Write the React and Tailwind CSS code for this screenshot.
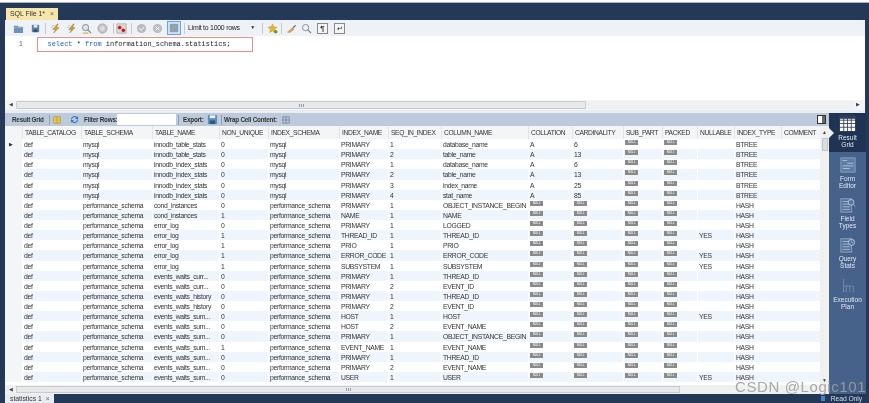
const cols = "grid-cols-[17px_59px_71px_67px_49px_71px_49px_53px_87px_44px_51px_39px_35px_37px_47px_39px]";
const P = "performance_schema";
const base = [
["def","mysql","innodb_table_stats","0","mysql","PRIMARY","1","database_name","A","6",null,null,"","BTREE"],
["def","mysql","innodb_table_stats","0","mysql","PRIMARY","2","table_name","A","13",null,null,"","BTREE"],
["def","mysql","innodb_index_stats","0","mysql","PRIMARY","1","database_name","A","6",null,null,"","BTREE"],
["def","mysql","innodb_index_stats","0","mysql","PRIMARY","2","table_name","A","13",null,null,"","BTREE"],
["def","mysql","innodb_index_stats","0","mysql","PRIMARY","3","index_name","A","25",null,null,"","BTREE"],
["def","mysql","innodb_index_stats","0","mysql","PRIMARY","4","stat_name","A","85",null,null,"","BTREE"],
];
const h = (t, u, i, s, c, n = "") => ["def", P, t, u, P, i, s, c, null, null, null, null, n, "HASH"];
const rows = base.concat([
h("cond_instances","0","PRIMARY","1","OBJECT_INSTANCE_BEGIN"),
h("cond_instances","1","NAME","1","NAME"),
h("error_log","0","PRIMARY","1","LOGGED"),
h("error_log","1","THREAD_ID","1","THREAD_ID","YES"),
h("error_log","1","PRIO","1","PRIO"),
h("error_log","1","ERROR_CODE","1","ERROR_CODE","YES"),
h("error_log","1","SUBSYSTEM","1","SUBSYSTEM","YES"),
h("events_waits_curr...","0","PRIMARY","1","THREAD_ID"),
h("events_waits_curr...","0","PRIMARY","2","EVENT_ID"),
h("events_waits_history","0","PRIMARY","1","THREAD_ID"),
h("events_waits_history","0","PRIMARY","2","EVENT_ID"),
h("events_waits_sum...","0","HOST","1","HOST","YES"),
h("events_waits_sum...","0","HOST","2","EVENT_NAME"),
h("events_waits_sum...","0","PRIMARY","1","OBJECT_INSTANCE_BEGIN"),
h("events_waits_sum...","1","EVENT_NAME","1","EVENT_NAME"),
h("events_waits_sum...","0","PRIMARY","1","THREAD_ID"),
h("events_waits_sum...","0","PRIMARY","2","EVENT_NAME"),
h("events_waits_sum...","0","USER","1","USER","YES"),
]);
const heads = ["TABLE_CATALOG","TABLE_SCHEMA","TABLE_NAME","NON_UNIQUE","INDEX_SCHEMA","INDEX_NAME","SEQ_IN_INDEX","COLUMN_NAME","COLLATION","CARDINALITY","SUB_PART","PACKED","NULLABLE","INDEX_TYPE","COMMENT"];

const Null = () => <span className="inline-block w-[13px] h-[5px] bg-[#8a8a8a] text-white text-[3px] tracking-normal leading-[5px] text-center align-top mt-[1px]">NULL</span>;

const Ico = ({ children, cls = "" }) => <svg viewBox="0 0 12 12" className={`w-[11px] h-[11px] flex-none ${cls}`}>{children}</svg>;
const Sep = ({ cls = "" }) => <div className={`w-px h-[11px] flex-none bg-[#c4cad3] ${cls}`} />;
const Bolt = ({ c = "#d9a520", cls }) => <Ico cls={cls}><path d="M8 1 3 7h3l-2 4 6-6H7l2-4z" fill={c} stroke="#8a6a10" strokeWidth=".4" /><path d="M2 3h3M1 5h2" stroke="#9aa0a8" strokeWidth=".6" /></Ico>;
const Grip = () => <div className="w-[5px] h-[3px] border-x border-[#9a9ea4] flex justify-center"><div className="w-px bg-[#9a9ea4]" /></div>;

function SideBtn({ label, cls, children, iconCls = "w-[16px] h-[16px]" }) {
  return (
    <div className={`flex flex-col items-center flex-none ${cls}`}>
      <svg viewBox="0 0 18 18" className={iconCls}>{children}</svg>
      <div className="text-[6.5px] leading-[7px] text-center text-[#e2e8f1] mt-[2px] whitespace-pre-line">{label}</div>
    </div>
  );
}

export default function App() {
  return (
    <div className="relative w-[869px] h-[403px] overflow-hidden bg-white font-['Liberation_Sans',sans-serif] text-[#222] blur-[0.35px]">
      <div className="h-[2px] bg-white" />
      <div className="h-[401px] bg-[#243857] border-t-[1px] border-[#a8b6c8] pl-[5px] pr-[4px] flex flex-col">
        <div className="h-[5px] flex-none" />
        {/* tab */}
        <div className="h-[12px] flex-none flex pl-[1px]">
          <div className="w-[52px] bg-[#f7e6ab] flex items-center pl-[4px] text-[7px] tracking-[-0.05px] text-[#333]">
            <span>SQL File 1*</span><span className="text-[#666] text-[7px] ml-[5px]">×</span>
          </div>
        </div>
        {/* toolbar */}
        <div className="h-[16px] flex-none bg-[#eef1f6] flex items-center">
          <Ico cls="ml-[8px]"><path d="M1 3h4l1 1h5v7H1z" fill="#6f93b5" /><path d="M1 5h10" stroke="#a9c2d8" strokeWidth=".6" /></Ico>
          <Ico cls="ml-[6px]"><path d="M2 2h8v8H2z" fill="#5f7f9f" /><path d="M4 2h4v3H4z" fill="#dfe8f0" /><path d="M4 7h4v3H4z" fill="#2f5070" /></Ico>
          <Sep cls="ml-[4px]" />
          <Bolt cls="ml-[4px]" />
          <Bolt c="#c5a030" cls="ml-[5px]" />
          <Ico cls="ml-[4px]"><circle cx="5" cy="5" r="3.4" fill="#dfe5ea" stroke="#7a8590" /><path d="M7.500 7.500 11 11" stroke="#7a8590" strokeWidth="1.400" /><path d="M2 11h6" stroke="#d0a030" /></Ico>
          <Ico cls="ml-[5px]"><circle cx="6" cy="6" r="5" fill="#c4c4c4" stroke="#a5a5a5" /><circle cx="6" cy="6" r="2.500" fill="#dedede" /></Ico>
          <Sep cls="ml-[5px]" />
          <Ico cls="ml-[2px]"><rect x="1" y="1" width="10" height="10" fill="#e8d8d0" stroke="#777" strokeWidth=".5" /><circle cx="4" cy="5" r="2" fill="#c02020" /><circle cx="8" cy="8" r="2" fill="#c02020" /></Ico>
          <Sep cls="ml-[4px]" />
          <Ico cls="ml-[4px]"><circle cx="6" cy="6" r="5" fill="#b9bcc0" /><path d="M3.500 6 5.500 8 8.500 4.500" stroke="#fff" fill="none" /></Ico>
          <Ico cls="ml-[5px]"><circle cx="6" cy="6" r="5" fill="#b9bcc0" /><path d="M4 4 8 8M8 4 4 8" stroke="#fff" /></Ico>
          <div className="ml-[4px] w-[14px] h-[14px] flex-none bg-[#cfe3f5] border border-[#6aa4d8] flex items-center justify-center">
            <svg viewBox="0 0 12 12" className="w-[10px] h-[10px]"><rect x="1" y="1" width="10" height="10" fill="#7ea3c8" /><path d="M3 9 9 3" stroke="#e0a030" strokeWidth="1.500" /></svg>
          </div>
          <Sep cls="ml-[3px]" />
          <div className="ml-[3px] w-[68px] flex-none flex items-center justify-between text-[6.9px] tracking-[-0.23px] pr-[1px]"><span>Limit to 1000 rows</span><span className="text-[5px]">▼</span></div>
          <Sep cls="ml-[6px]" />
          <Ico cls="ml-[4px]"><path d="M6 1l1.500 3.200 3.500.400-2.600 2.300.700 3.500L6 8.600 2.900 10.400l.7-3.500L1 4.600l3.500-.4z" fill="#e5b830" stroke="#a88418" strokeWidth=".4" /><circle cx="9.500" cy="9.500" r="2" fill="#5da02f" /></Ico>
          <Sep cls="ml-[3px]" />
          <Ico cls="ml-[4px]"><path d="M1 10 7 5l2 2-5 4z" fill="#c8a060" /><path d="M7 5l3-3 1 1-3 3z" fill="#8a7050" /></Ico>
          <Ico cls="ml-[4px]"><circle cx="5" cy="5" r="3.400" fill="#eef2f5" stroke="#7a8590" /><path d="M7.500 7.500 11 11" stroke="#7a8590" strokeWidth="1.400" /></Ico>
          <div className="ml-[5px] w-[11px] h-[11px] flex-none border border-[#888] bg-[#f4f4f4] text-[8px] leading-[9px] text-center">¶</div>
          <div className="ml-[6px] w-[11px] h-[11px] flex-none border border-[#888] bg-[#f4f4f4] text-[7px] leading-[9px] text-center">↵</div>
        </div>
        {/* editor */}
        <div className="h-[64px] flex-none bg-white relative">
          <div className="flex items-start pt-[3px] font-['Liberation_Mono',monospace] text-[6.940px] leading-[10px]">
            <span className="w-[18px] text-right text-[#3f6f9f]">1</span>
            <span className="ml-[24.500px]"><span className="text-[#2060c0]">select</span> * <span className="text-[#2060c0]">from</span> information_schema.statistics;</span>
          </div>
          <div className="absolute left-[32px] top-[1px] w-[216px] h-[15px] border border-[#f08a8a]" />
        </div>
        {/* h scroll */}
        <div className="h-[10px] flex-none bg-[#f2f4f7] flex items-center pr-[3px]">
          <div className="w-[11px] flex-none text-center text-[5px] text-[#444]">◀</div>
          <div className="w-[570px] flex-none h-[8px] bg-[#e6e8ea] border border-[#c8ccd0] rounded-[1px] flex items-center justify-center"><Grip /></div>
          <div className="flex-1 h-[8px] bg-[#eef0f2]" />
          <div className="w-[8px] flex-none text-center text-[5px] text-[#444]">▶</div>
        </div>
        <div className="h-[3px] flex-none bg-[#e9edf3]" />
        {/* results + side panel */}
        <div className="h-[281px] flex-none flex min-h-0">
          <div className="w-[824px] flex-none flex flex-col bg-[#f0f2f5]">
            {/* result toolbar */}
            <div className="h-[13px] flex-none bg-[#bccadb] flex items-center text-[6.300px] font-bold tracking-[-0.2px] text-[#333]">
              <span className="ml-[7px] w-[34px] flex-none whitespace-nowrap">Result Grid</span>
              <div className="w-px h-[10px] flex-none bg-[#8fa0b5] ml-[3px]" />
              <svg viewBox="0 0 10 10" className="w-[8px] h-[10px] flex-none ml-[3px]"><rect x="1" y="1" width="8" height="8" fill="#e8c43a" stroke="#8a7a30" strokeWidth=".5" /><path d="M5 1v8" stroke="#8a7a30" strokeWidth=".5" /></svg>
              <svg viewBox="0 0 10 10" className="w-[9px] h-[9px] flex-none ml-[9px]"><path d="M1 5a4 4 0 0 1 7-2.500L9 1v3.500H5.500L7 3a3 3 0 0 0-5 2zM9 5a4 4 0 0 1-7 2.500L1 9V5.500h3.500L3 7a3 3 0 0 0 5-2z" fill="#2f74c0" /></svg>
              <span className="ml-[5px] w-[32px] flex-none whitespace-nowrap">Filter Rows:</span>
              <div className="w-[59px] h-[11px] flex-none bg-white ml-[1px]" />
              <div className="w-px h-[10px] flex-none bg-[#8fa0b5] ml-[2px]" />
              <span className="ml-[4px] w-[20px] flex-none">Export:</span>
              <svg viewBox="0 0 12 12" className="w-[11px] h-[11px] flex-none ml-[4px]"><rect x="1" y="1" width="10" height="10" fill="#5f8fb8" /><rect x="3" y="1.500" width="6" height="3" fill="#eef3f8" /><rect x="3" y="7" width="6" height="4" fill="#2f5a80" /></svg>
              <div className="w-px h-[10px] flex-none bg-[#8fa0b5] ml-[3px]" />
              <span className="ml-[2px] w-[54px] flex-none whitespace-nowrap">Wrap Cell Content:</span>
              <svg viewBox="0 0 10 10" className="w-[8px] h-[8px] flex-none ml-[4px]"><path d="M1 1h8v8H1zM1 5h8M5 1v8" fill="none" stroke="#55657a" strokeWidth=".7" /></svg>
              <div className="ml-auto mr-[3px] w-[9px] h-[9px] border border-[#333] bg-white flex justify-end"><div className="w-[3px] bg-[#666]" /></div>
            </div>
            {/* grid */}
            <div className="h-[259px] flex-none flex">
              <div className="w-[815px] flex-none bg-white overflow-hidden">
                <div className={`grid ${cols} h-[13px] bg-[#f4f5f7] text-[6.700px] tracking-[-0.35px] leading-[13px] text-[#333]`}>
                  <div />
                  {heads.map((t) => <div key={t} className="pl-[2px] border-l border-[#e2e4e8] whitespace-nowrap overflow-hidden">{t}</div>)}
                </div>
                {rows.map((r, i) => (
                  <div key={i} className={`grid ${cols} grid-rows-[10.130px] h-[10.130px] text-[6.800px] tracking-[-0.3px] leading-[12px] text-[#333] ${i % 2 ? "bg-[#eff5fd]" : "bg-white"}`}>
                    <div className="bg-[#f4f5f7] flex items-center pl-[4px] text-[5px]">{i === 0 ? "▶" : ""}</div>
                    {r.map((c, j) => (
                      <div key={j} className="pl-[1px] border-l border-white whitespace-nowrap overflow-hidden">{c === null ? <Null /> : c}</div>
                    ))}
                  </div>
                ))}
              </div>
              <div className="w-[9px] flex-none bg-[#f0f0f0] flex flex-col items-center text-[5px] text-[#444] pt-[3px]">
                <span>▲</span>
                <div className="w-[6px] h-[13px] mt-[1px] bg-[#dcdde0] border border-[#bfc2c6] flex-none" />
                <span className="mt-auto mb-[1px]">▼</span>
              </div>
            </div>
            {/* bottom h scroll */}
            <div className="h-[9px] flex-none bg-[#f0f0f0] flex items-center">
              <div className="w-[11px] flex-none text-center text-[5px] text-[#444]">◀</div>
              <div className="w-[664px] flex-none h-[7px] bg-[#e6e8ea] border border-[#c8ccd0] flex items-center justify-center"><Grip /></div>
            </div>
          </div>
          {/* side panel */}
          <div className="w-[37px] flex-none bg-[#46618a] flex flex-col relative">
            <div className="absolute left-0 top-[15px] w-0 h-0 border-y-[5px] border-y-transparent border-l-[5px] border-l-[#eef1f6]" />
            <SideBtn label={"Result\nGrid"} cls="h-[39px] pt-[2px] bg-[#1f3354]" iconCls="w-[17px] h-[17px]">
              <rect x="1" y="1" width="16" height="16" fill="#fff" />
              <path d="M1 5.500h16M1 9h16M1 13h16M5 1v16M9 1v16M13 1v16" stroke="#2c3e5a" strokeWidth=".9" />
              <rect x="1" y="1" width="16" height="3" fill="#2c3e5a" />
            </SideBtn>
            <SideBtn label={"Form\nEditor"} cls="h-[40px] pt-[5px]">
              <rect x="1" y="1" width="16" height="16" fill="#5b7da6" stroke="#8fa6c4" />
              <path d="M3 4h5M8 7h7M3 10h12M3 13h8" stroke="#b8c8dc" />
            </SideBtn>
            <SideBtn label={"Field\nTypes"} cls="h-[40px] pt-[5px]">
              <rect x="1" y="2" width="12" height="15" fill="#55739a" stroke="#8fa6c4" />
              <path d="M3 5h8M3 8h8M3 11h8M3 14h8" stroke="#a9bbd2" />
              <circle cx="12.500" cy="6" r="3.200" fill="#55739a" stroke="#b8c8dc" /><path d="M15 8.500l2 2" stroke="#b8c8dc" />
            </SideBtn>
            <SideBtn label={"Query\nStats"} cls="h-[41px] pt-[5px]">
              <rect x="1" y="2" width="12" height="15" fill="#55739a" stroke="#8fa6c4" />
              <path d="M3 5h8M3 8h8M3 11h8M3 14h8" stroke="#a9bbd2" />
              <circle cx="13" cy="6" r="3.500" fill="#55739a" stroke="#b8c8dc" /><path d="M13 4v2h1.500" stroke="#b8c8dc" fill="none" strokeWidth=".7" />
            </SideBtn>
            <SideBtn label={"Execution\nPlan"} cls="h-[40px] pt-[5px]">
              <path d="M4 2v13M3 2h2M4 9h11M7 9v5M11 9v5M15 9v5M3 15h2M6 15h2M10 15h2M14 15h2" stroke="#7d93b2" strokeWidth=".9" fill="none" />
            </SideBtn>
          </div>
        </div>
        {/* bottom bar */}
        <div className="h-[9px] flex-none flex items-start">
          <div className="w-[49px] h-[9px] flex-none bg-[#e9edf3] pl-[5px] text-[6.800px] leading-[9px] text-[#333]">statistics 1 <span className="ml-[2px] text-[#666]">×</span></div>
          <div className="ml-auto mr-[3px] flex items-center text-[6.800px] tracking-[-0.1px] leading-[9px] text-[#d4dce8]"><span className="w-[4px] h-[5px] bg-[#3f86d0] mr-[6px]" />Read Only</div>
        </div>
      </div>
      <div className="absolute left-[735px] top-[377px] text-[15px] leading-[20px] tracking-[0.6px] text-[#a0a0a0]/90">CSDN @Logic101</div>
    </div>
  );
}
